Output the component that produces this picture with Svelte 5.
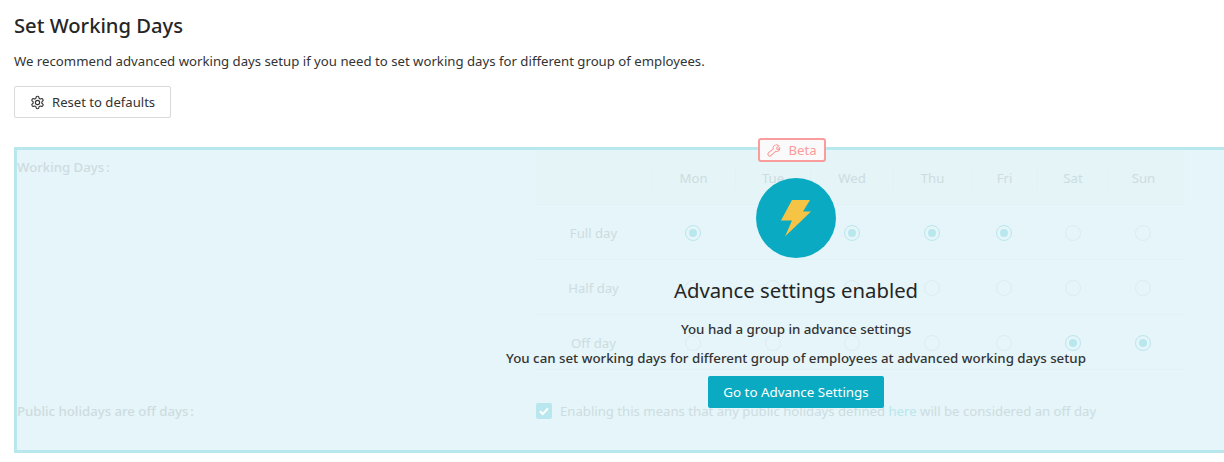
<script>
    const days = ['Mon', 'Tue', 'Wed', 'Thu', 'Fri', 'Sat', 'Sun'];
    const rows = [
        { label: 'Full day', on: [0, 1, 2, 3, 4] },
        { label: 'Half day', on: [] },
        { label: 'Off day', on: [5, 6] }
    ];
</script>

<div class="page">
    <h1>Set Working Days</h1>
    <p class="intro">We recommend advanced working days setup if you need to set working days for different group of employees.</p>
    <button class="reset">
        <svg width="15" height="15" viewBox="0 0 24 24" fill="none" stroke="#333" stroke-width="1.800" stroke-linejoin="round">
            <circle cx="12" cy="12" r="3.400"></circle>
            <path d="M12.220 2h-.44a2 2 0 0 0-2 2v.18a2 2 0 0 1-1 1.730l-.43.25a2 2 0 0 1-2 0l-.15-.08a2 2 0 0 0-2.730.73l-.22.38a2 2 0 0 0 .73 2.730l.15.1a2 2 0 0 1 1 1.720v.51a2 2 0 0 1-1 1.740l-.15.09a2 2 0 0 0-.73 2.730l.22.38a2 2 0 0 0 2.730.73l.15-.08a2 2 0 0 1 2 0l.43.25a2 2 0 0 1 1 1.730V20a2 2 0 0 0 2 2h.44a2 2 0 0 0 2-2v-.18a2 2 0 0 1 1-1.730l.43-.25a2 2 0 0 1 2 0l.15.08a2 2 0 0 0 2.730-.73l.22-.39a2 2 0 0 0-.73-2.730l-.15-.08a2 2 0 0 1-1-1.740v-.5a2 2 0 0 1 1-1.740l.15-.09a2 2 0 0 0 .73-2.730l-.22-.38a2 2 0 0 0-2.730-.73l-.15.08a2 2 0 0 1-2 0l-.43-.25a2 2 0 0 1-1-1.730V4a2 2 0 0 0-2-2z"></path>
        </svg>
        Reset to defaults
    </button>

    <section class="panel">
        <div class="under">
            <div class="field">
                <div class="label">Working Days<span class="colon">:</span></div>
                <div class="table">
                    <div class="row head">
                        <div class="name"></div>
                        {#each days as day}
                            <div class="cell">{day}</div>
                        {/each}
                    </div>
                    {#each rows as row}
                        <div class="row">
                            <div class="name">{row.label}</div>
                            {#each days as day, i}
                                <div class="cell"><span class="radio" class:on={row.on.includes(i)}></span></div>
                            {/each}
                        </div>
                    {/each}
                </div>
            </div>
            <div class="field holidays">
                <div class="label">Public holidays are off days<span class="colon">:</span></div>
                <div class="check">
                    <span class="box">
                        <svg width="12" height="12" viewBox="0 0 12 12" fill="none" stroke="#fff" stroke-width="2"><path d="M2 6.200l2.800 2.800L10 3.400"></path></svg>
                    </span>
                    <span>Enabling this means that any public holidays defined <a href="#here">here</a> will be considered an off day</span>
                </div>
            </div>
        </div>

        <div class="beta">
            <svg width="14" height="14" viewBox="0 0 24 24" fill="none" stroke="#fb9c9c" stroke-width="2" stroke-linejoin="round">
                <path d="M15 3a6 6 0 0 1 6.600 1.400l-4 4 .6 2.400 2.400.6 3-3.400a6 6 0 0 1-8 7L7 23a3 3 0 0 1-5.500-4.800l9.500-8a6 6 0 0 1 4-7.200z" transform="translate(1 1) scale(.88)"></path>
            </svg>
            Beta
        </div>

        <div class="notice">
            <div class="bolt">
                <svg width="30" height="37" viewBox="0 0 30 37"><path d="M11 0h18l-7 11.500h8L4 36.500l7-16H0z" fill="#f6c445"></path></svg>
            </div>
            <h2>Advance settings enabled</h2>
            <p>You had a group in advance settings</p>
            <p>You can set working days for different group of employees at advanced working days setup</p>
            <button class="go">Go to Advance Settings</button>
        </div>
    </section>
</div>

<style>
    :global(body) {
        font-family: "Noto Sans", "Open Sans", sans-serif;
        background: #fff;
        color: #262626;
        overflow: hidden;
    }
    .page {
        height: 462px;
        padding: 13px 0 0 14px;
        box-sizing: border-box;
        overflow: hidden;
    }
    h1 {
        margin: 0;
        font-size: 20.200px;
        line-height: 25px;
        font-weight: 500;
        color: #262626;
    }
    .intro {
        margin: 12px 0 0;
        font-size: 13.200px;
        line-height: 22px;
        color: #333;
    }
    button {
        font-family: inherit;
    }
    .reset {
        display: flex;
        align-items: center;
        gap: 7px;
        margin-top: 14px;
        height: 32px;
        padding: 0 15px;
        background: #fff;
        border: 1px solid #d9d9d9;
        border-radius: 2px;
        font-size: 13.100px;
        color: #333;
    }
    .panel {
        position: relative;
        margin-top: 29px;
        width: 1561px;
        height: 306px;
        box-sizing: border-box;
        border: 3px solid #b9e7ee;
        border-right: 0;
        background: #e5f5f9;
    }
    .under {
        color: #cddce0;
        font-size: 13.170px;
    }
    .field {
        display: flex;
    }
    .label {
        width: 519px;
        line-height: 22px;
        margin-top: 6px;
        font-size: 13.200px;
        font-weight: 500;
    }
    .colon {
        margin-left: 2px;
    }
    .table {
        width: 649px;
        margin-top: 1px;
    }
    .row {
        display: grid;
        grid-template-columns: 115px 84px 75px 83px 78px 66px 71px 70px;
        height: 55px;
        border-bottom: 1px solid #e0f2f6;
        box-sizing: border-box;
        align-items: center;
        padding-top: 1px;
    }
    .row.head {
        height: 54px;
        background: #e4f4f7;
        padding-top: 0;
    }
    .head .cell {
        border-left: 1px solid #e0f2f6;
        height: 22px;
        line-height: 22px;
    }
    .name {
        text-align: center;
    }
    .cell {
        display: flex;
        justify-content: center;
        align-items: center;
    }
    .radio {
        width: 16px;
        height: 16px;
        box-sizing: border-box;
        border: 1px solid #dcecf0;
        border-radius: 50%;
        display: flex;
        align-items: center;
        justify-content: center;
    }
    .radio.on {
        border-color: #b9e7ee;
    }
    .radio.on::after {
        content: "";
        width: 8px;
        height: 8px;
        border-radius: 50%;
        background: #b9e7ee;
    }
    .holidays {
        margin-top: 19px;
    }
    .holidays .label {
        margin-top: 11px;
    }
    .check {
        display: flex;
        align-items: center;
        gap: 8px;
        margin-top: 11px;
        line-height: 22px;
        height: 22px;
    }
    .box {
        width: 16px;
        height: 16px;
        border-radius: 2px;
        background: #b9e7ee;
        display: flex;
        align-items: center;
        justify-content: center;
    }
    a {
        color: #b9e7ee;
        text-decoration: none;
    }
    .beta {
        position: absolute;
        left: 741px;
        top: -12px;
        width: 68px;
        height: 24px;
        box-sizing: border-box;
        display: flex;
        align-items: center;
        justify-content: center;
        gap: 7px;
        border: 2px solid #fb9c9c;
        border-radius: 3px;
        background: #fafafa;
        color: #fb9c9c;
        font-size: 13.200px;
    }
    .notice {
        position: absolute;
        left: 0;
        top: 0;
        width: 100%;
        display: flex;
        flex-direction: column;
        align-items: center;
    }
    .bolt {
        width: 80px;
        height: 80px;
        margin-top: 28px;
        border-radius: 50%;
        background: #0aaac3;
        display: flex;
        align-items: center;
        justify-content: center;
    }
    h2 {
        margin: 18px 0 11px;
        font-size: 20.300px;
        line-height: 28px;
        font-weight: 400;
        color: #262626;
    }
    .notice p {
        margin: 0;
        font-size: 13.300px;
        line-height: 29px;
        font-weight: 500;
        color: #333;
    }
    .go {
        margin-top: 3px;
        width: 176px;
        height: 32px;
        border: 0;
        border-radius: 2px;
        background: #0aaac3;
        color: #fff;
        font-size: 13.400px;
    }
</style>
